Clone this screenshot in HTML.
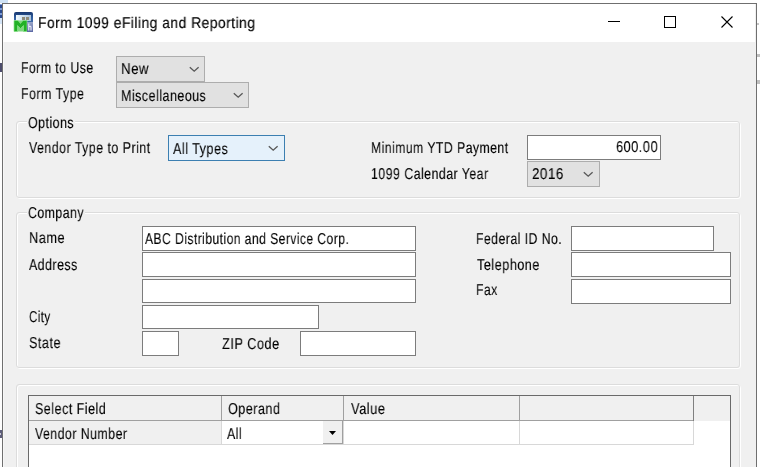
<!DOCTYPE html>
<html><head><meta charset="utf-8">
<style>
html,body{margin:0;padding:0;}
body{width:768px;height:467px;overflow:hidden;background:#ffffff;position:relative;font-family:"Liberation Sans",sans-serif;}
.a{position:absolute;}
.t{position:absolute;will-change:transform;text-rendering:geometricPrecision;letter-spacing:0.6px;-webkit-text-stroke:0.1px #000;font-size:14px;line-height:16px;white-space:nowrap;color:#000;transform-origin:0 0;}
#win{left:2px;top:3px;width:753px;height:470px;border:1px solid #6f6f6f;background:#f0f0f0;}
#tb{left:3px;top:4px;width:752px;height:38px;background:#fff;}
.grp{position:absolute;border:1px solid #dcdcdc;border-radius:3px;box-shadow:inset 1px 1px 0 #fff, 1px 1px 0 #fff;}
.cb{position:absolute;box-sizing:border-box;border:1px solid #adadad;background:#e1e1e1;}
.tx{position:absolute;box-sizing:border-box;border:1px solid #7c7c7c;background:#fff;}
.chev{position:absolute;}
</style></head><body>
<!-- background strip -->
<div class="a" style="left:0;top:0;width:2px;height:467px;background:#fdfdfd"></div>
<div class="a" style="left:0;top:0;width:8px;height:3px;background:#cfe2f5"></div><div class="a" style="left:0;top:4px;width:2px;height:14px;background:#7d9bd6"></div><div class="a" style="left:0;top:5px;width:2px;height:3px;background:#2b4a8e"></div><div class="a" style="left:0;top:10px;width:2px;height:3px;background:#2b4a8e"></div><div class="a" style="left:0;top:15px;width:2px;height:3px;background:#2b4a8e"></div><div class="a" style="left:0;top:18px;width:2px;height:6px;background:#d4e4f6"></div><div class="a" style="left:0;top:63px;width:2px;height:9px;background:#4c4c6c"></div><div class="a" style="left:0;top:430px;width:2px;height:8px;background:#5c5c7a"></div><div class="a" style="left:0;top:433px;width:1px;height:2px;background:#c8c8d4"></div><div class="a" style="left:757px;top:23px;width:2px;height:2px;background:#c8c8c8"></div><div class="a" style="left:757px;top:54px;width:3px;height:3px;background:#c0c0c0"></div><div class="a" style="left:757px;top:80px;width:3px;height:4px;background:#c0c0c0"></div>

<div id="win" class="a"></div>
<div id="tb" class="a"></div><div class="a" style="left:3px;top:42px;width:1px;height:425px;background:#f7f7f7"></div>

<!-- icon -->
<svg class="a" style="left:13px;top:11px" width="21" height="22" viewBox="0 0 21 22">
  <defs>
   <linearGradient id="gb" x1="0" y1="0" x2="0" y2="1"><stop offset="0" stop-color="#17376f"/><stop offset="0.3" stop-color="#2f5d9e"/><stop offset="1" stop-color="#5f87bf"/></linearGradient>
   <linearGradient id="gw" x1="0" y1="0" x2="1" y2="0"><stop offset="0" stop-color="#f2fbff"/><stop offset="1" stop-color="#a9c3dc"/></linearGradient>
   <linearGradient id="gh" x1="0" y1="0" x2="0" y2="1"><stop offset="0" stop-color="#9aa6c8"/><stop offset="1" stop-color="#5b68a4"/></linearGradient>
  </defs>
  <path d="M1 3 Q1 1 3 1 H18 Q20 1 20 3 V20 H1 Z" fill="url(#gb)"/>
  <rect x="3" y="4" width="15" height="6" fill="url(#gw)"/>
  <rect x="9" y="6" width="3" height="3" fill="#8d8a78"/>
  <rect x="13" y="6" width="3" height="3" fill="#8d8a78"/>
  <rect x="1" y="9.5" width="13" height="11" fill="#7fd67f"/><path d="M1 20.5 V9.5 H5 L7.5 12.5 L10 9.5 H14 V20.5 H10.5 V14.5 L7.5 17.5 L4.5 14.5 V20.5 Z" fill="#22b126" stroke="#8fe38f" stroke-width="1" stroke-opacity="0.7"/>
  <rect x="14" y="11" width="6" height="10" fill="url(#gh)"/>
  <path d="M15.8 12.5 V19.5 M15.8 15.8 Q18 14.5 18 16.5 V19.5" stroke="#eef0fa" stroke-width="1.1" fill="none"/>
</svg>

<!-- window buttons -->
<div class="a" style="left:608px;top:21px;width:12px;height:1px;background:#000"></div>
<div class="a" style="left:664px;top:16px;width:10px;height:10px;border:1px solid #000"></div>
<svg class="a" style="left:721px;top:16px" width="12" height="12" viewBox="0 0 12 12"><path d="M0.5 0.5 L11.5 11.5 M11.5 0.5 L0.5 11.5" stroke="#000" stroke-width="1.1"/></svg>

<!-- Form to use -->
<div class="cb" style="left:116px;top:56px;width:89px;height:26px;"></div>
<svg class="chev" style="left:189px;top:66px" width="11" height="7" viewBox="0 0 11 7"><path d="M0.8 1.2 L5.2 5.2 L9.6 1.2" stroke="#585858" stroke-width="1.35" fill="none"/></svg>
<div class="cb" style="left:116px;top:82px;width:133px;height:26px;"></div>
<svg class="chev" style="left:233px;top:92px" width="11" height="7" viewBox="0 0 11 7"><path d="M0.8 1.2 L5.2 5.2 L9.6 1.2" stroke="#585858" stroke-width="1.35" fill="none"/></svg>

<!-- Options group -->
<div class="a" style="left:17px;top:122px;width:724px;height:77px;box-sizing:border-box;border:1px solid #fff;border-radius:3px;"></div><div class="a" style="left:16px;top:121px;width:724px;height:77px;box-sizing:border-box;border:1px solid #dcdcdc;border-radius:3px;"></div>
<div class="a" style="left:27px;top:114px;width:48px;height:14px;background:#f0f0f0"></div>
<div class="cb" style="left:168px;top:135px;width:117px;height:26px;border-color:#3c7fb1;background:#e5f1fb;"></div>
<svg class="chev" style="left:268px;top:145px" width="11" height="7" viewBox="0 0 11 7"><path d="M0.8 1.2 L5.2 5.2 L9.6 1.2" stroke="#585858" stroke-width="1.35" fill="none"/></svg>

<div class="tx" style="left:527px;top:135px;width:134px;height:25px;"></div>
<div class="cb" style="left:527px;top:161px;width:73px;height:26px;"></div>
<svg class="chev" style="left:583px;top:171px" width="11" height="7" viewBox="0 0 11 7"><path d="M0.8 1.2 L5.2 5.2 L9.6 1.2" stroke="#585858" stroke-width="1.35" fill="none"/></svg>

<!-- Company group -->
<div class="a" style="left:17px;top:213px;width:724px;height:156px;box-sizing:border-box;border:1px solid #fff;border-radius:3px;"></div><div class="a" style="left:16px;top:212px;width:724px;height:156px;box-sizing:border-box;border:1px solid #dcdcdc;border-radius:3px;"></div>
<div class="a" style="left:27px;top:205px;width:58px;height:14px;background:#f0f0f0"></div>
<div class="tx" style="left:142px;top:226px;width:274px;height:25px;"></div>
<div class="tx" style="left:142px;top:252px;width:274px;height:25px;"></div>
<div class="tx" style="left:142px;top:279px;width:274px;height:24px;"></div>
<div class="tx" style="left:142px;top:305px;width:177px;height:24px;"></div>
<div class="tx" style="left:142px;top:331px;width:37px;height:25px;"></div>
<div class="tx" style="left:300px;top:331px;width:116px;height:25px;"></div>

<div class="tx" style="left:571px;top:226px;width:143px;height:25px;"></div>
<div class="tx" style="left:571px;top:252px;width:160px;height:25px;"></div>
<div class="tx" style="left:571px;top:279px;width:160px;height:25px;"></div>

<!-- Grid group -->
<div class="a" style="left:17px;top:385px;width:724px;height:120px;box-sizing:border-box;border:1px solid #fff;border-radius:3px;"></div><div class="a" style="left:16px;top:384px;width:724px;height:120px;box-sizing:border-box;border:1px solid #dcdcdc;border-radius:3px;"></div>
<div class="a" style="left:28px;top:395px;width:703px;height:80px;box-sizing:border-box;border:1px solid #6a6a6a;background:#fff;"></div>
<div class="a" style="left:29px;top:396px;width:701px;height:25px;background:#f0f0f0;"></div>
<div class="a" style="left:29px;top:420px;width:665px;height:1px;background:#a0a0a0;"></div>
<div class="a" style="left:221px;top:396px;width:1px;height:25px;background:#a0a0a0;"></div>
<div class="a" style="left:343px;top:396px;width:1px;height:25px;background:#a0a0a0;"></div>
<div class="a" style="left:519px;top:396px;width:1px;height:25px;background:#a0a0a0;"></div>
<div class="a" style="left:693px;top:396px;width:1px;height:25px;background:#808080;"></div>
<!-- row -->
<div class="a" style="left:29px;top:421px;width:192px;height:23px;background:#f0f0f0;"></div>
<div class="a" style="left:29px;top:444px;width:665px;height:1px;background:#d8d8d8;"></div>
<div class="a" style="left:221px;top:421px;width:1px;height:24px;background:#d8d8d8;"></div>
<div class="a" style="left:343px;top:421px;width:1px;height:24px;background:#d8d8d8;"></div>
<div class="a" style="left:519px;top:421px;width:1px;height:24px;background:#d8d8d8;"></div>
<div class="a" style="left:693px;top:421px;width:1px;height:24px;background:#d8d8d8;"></div>
<div class="a" style="left:323px;top:421px;width:20px;height:23px;box-sizing:border-box;background:#f0f0f0;border-right:1px solid #a0a0a0;border-bottom:1px solid #a0a0a0;"></div>
<svg class="a" style="left:329px;top:431px" width="8" height="5" viewBox="0 0 8 5"><path d="M0 0 H7 L3.5 4 Z" fill="#000"/></svg>


<div class="t" id="title" style="left:37.60px;top:14.60px;font-size:15.5px;letter-spacing:0.5px;-webkit-text-stroke:0.15px #000;line-height:18px;transform:scaleX(0.8983)">Form 1099 eFiling and Reporting</div>
<div class="t" id="l_ftu" style="left:20.60px;top:61.00px;font-size:15.75px;transform:scaleX(0.7781)">Form to Use</div>
<div class="t" id="l_ft" style="left:20.50px;top:87.20px;font-size:15.75px;transform:scaleX(0.7885)">Form Type</div>
<div class="t" id="v_new" style="left:120.60px;top:62.20px;font-size:15.75px;transform:scaleX(0.8445)">New</div>
<div class="t" id="v_misc" style="left:120.50px;top:89.40px;font-size:15.75px;transform:scaleX(0.7933)">Miscellaneous</div>
<div class="t" id="l_opt" style="left:27.80px;top:115.70px;font-size:15.75px;transform:scaleX(0.7867)">Options</div>
<div class="t" id="l_vtp" style="left:29.30px;top:141.00px;font-size:15.75px;transform:scaleX(0.7869)">Vendor Type to Print</div>
<div class="t" id="v_allt" style="left:173.00px;top:142.25px;font-size:15.75px;transform:scaleX(0.8011)">All Types</div>
<div class="t" id="l_min" style="left:370.90px;top:141.40px;font-size:15.75px;transform:scaleX(0.7750)">Minimum YTD Payment</div>
<div class="t" id="l_cal" style="left:371.00px;top:167.20px;font-size:15.75px;transform:scaleX(0.7838)">1099 Calendar Year</div>
<div class="t" id="v_600" style="left:616.00px;top:140.00px;font-size:15.75px;transform:scaleX(0.8122)">600.00</div>
<div class="t" id="v_2016" style="left:531.75px;top:167.10px;font-size:15.75px;transform:scaleX(0.8505)">2016</div>
<div class="t" id="l_comp" style="left:27.90px;top:206.10px;font-size:15.75px;transform:scaleX(0.7802)">Company</div>
<div class="t" id="l_name" style="left:28.70px;top:231.10px;font-size:15.75px;transform:scaleX(0.8145)">Name</div>
<div class="t" id="l_addr" style="left:29.20px;top:257.50px;font-size:15.75px;transform:scaleX(0.7871)">Address</div>
<div class="t" id="l_city" style="left:29.00px;top:310.30px;font-size:15.75px;transform:scaleX(0.7326)">City</div>
<div class="t" id="l_state" style="left:29.00px;top:336.20px;font-size:15.75px;transform:scaleX(0.8028)">State</div>
<div class="t" id="v_abc" style="left:145.40px;top:232.30px;font-size:15.75px;transform:scaleX(0.7668)">ABC Distribution and Service Corp.</div>
<div class="t" id="l_zip" style="left:221.50px;top:337.20px;font-size:15.75px;transform:scaleX(0.8115)">ZIP Code</div>
<div class="t" id="l_fed" style="left:475.90px;top:232.00px;font-size:15.75px;transform:scaleX(0.7778)">Federal ID No.</div>
<div class="t" id="l_tel" style="left:477.30px;top:258.40px;font-size:15.75px;transform:scaleX(0.8053)">Telephone</div>
<div class="t" id="l_fax" style="left:476.00px;top:283.40px;font-size:15.75px;transform:scaleX(0.7776)">Fax</div>
<div class="t" id="h_sel" style="left:35.10px;top:402.10px;font-size:15.75px;transform:scaleX(0.7955)">Select Field</div>
<div class="t" id="h_op" style="left:228.00px;top:402.10px;font-size:15.75px;transform:scaleX(0.8005)">Operand</div>
<div class="t" id="h_val" style="left:350.90px;top:402.20px;font-size:15.75px;transform:scaleX(0.8173)">Value</div>
<div class="t" id="c_vn" style="left:34.60px;top:427.25px;font-size:15.75px;transform:scaleX(0.7830)">Vendor Number</div>
<div class="t" id="c_all" style="left:226.70px;top:427.10px;font-size:15.75px;transform:scaleX(0.7861)">All</div>
</body></html>
